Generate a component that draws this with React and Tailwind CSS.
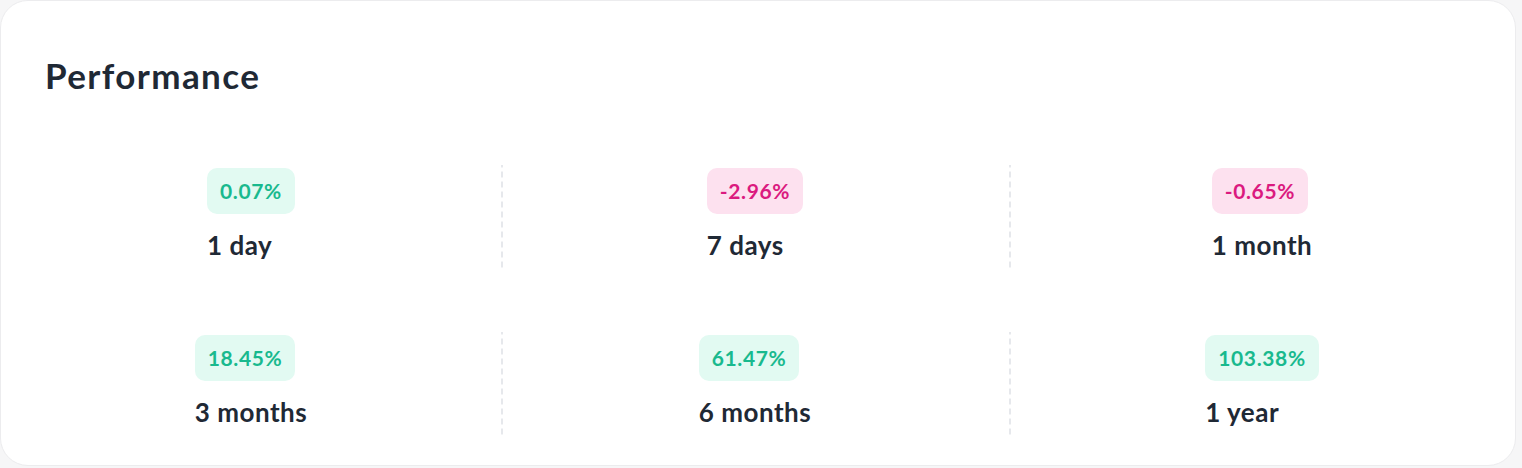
import React from "react";

const stats = [
  { value: "0.07%", label: "1 day", up: true },
  { value: "-2.96%", label: "7 days", up: false },
  { value: "-0.65%", label: "1 month", up: false },
  { value: "18.45%", label: "3 months", up: true },
  { value: "61.47%", label: "6 months", up: true },
  { value: "103.38%", label: "1 year", up: true },
];

const StatCell = ({ stat, index }) => (
  <div
    className={`flex h-[103px] justify-center pt-[3px] ${
      index % 3 !== 0
        ? "bg-[linear-gradient(to_bottom,#e6e8ec_60%,transparent_60%)] bg-[length:2px_10px] bg-left bg-repeat-y"
        : ""
    }`}
  >
    <div className="flex flex-col items-start">
      <span
        className={`rounded-[10px] px-[13px] py-[10px] text-[21px] font-bold leading-[26px] tracking-[0.03em] ${
          stat.up ? "bg-[#e2faf2] text-[#19b98e]" : "bg-[#fde1ef] text-[#db1a7f]"
        }`}
      >
        {stat.value}
      </span>
      <span className="mt-[16px] text-[26px] font-bold leading-[30px] tracking-[0.02em] text-[#1f2935]">
        {stat.label}
      </span>
    </div>
  </div>
);

export default function App() {
  return (
    <div className="h-[468px] w-full bg-[#f6f6f7]" style={{ fontFamily: "Lato, 'Noto Sans', sans-serif" }}>
      <div className="h-[466px] w-[1516px] rounded-[28px] border border-[#ececee] bg-white">
        <h2 className="pl-[44px] pt-[52px] text-[35px] font-bold leading-[44px] tracking-[0.04em] text-[#1f2935]">
          Performance
        </h2>
        <div className="mt-[68px] grid grid-cols-[500px_508px_1fr] gap-y-[64px]">
          {stats.map((stat, i) => (
            <StatCell key={stat.label} stat={stat} index={i} />
          ))}
        </div>
      </div>
    </div>
  );
}
